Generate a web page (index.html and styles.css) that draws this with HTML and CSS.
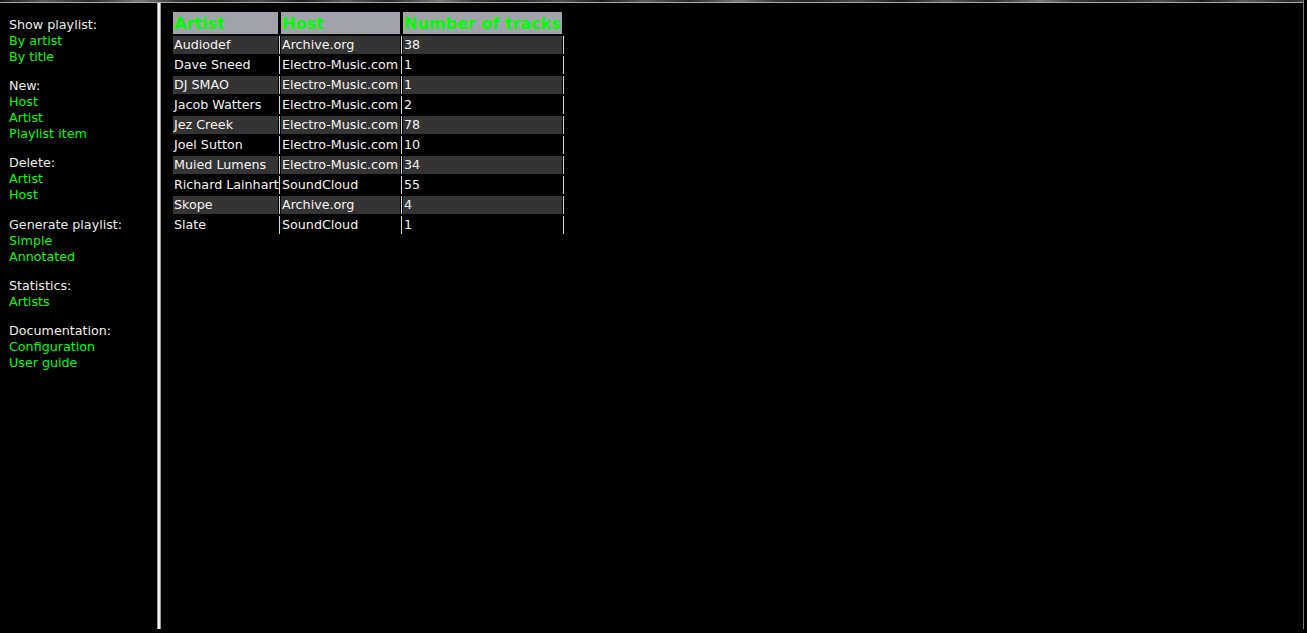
FILE: index.html
```html
<!DOCTYPE html>
<html>
<head>
<meta charset="utf-8">
<title>Playlist</title>
<link rel="stylesheet" href="styles.css">
</head>
<body>
<div class="screen">
  <div class="frameset">
    <div class="topband"></div>
    <div class="main">
      <nav class="sidebar">
        <div class="group">
          <span class="label">Show playlist:</span>
          <a class="link" href="#">By artist</a>
          <a class="link" href="#">By title</a>
        </div>
        <div class="group">
          <span class="label">New:</span>
          <a class="link" href="#">Host</a>
          <a class="link" href="#">Artist</a>
          <a class="link" href="#">Playlist item</a>
        </div>
        <div class="group">
          <span class="label">Delete:</span>
          <a class="link" href="#">Artist</a>
          <a class="link" href="#">Host</a>
        </div>
        <div class="group">
          <span class="label">Generate playlist:</span>
          <a class="link" href="#">Simple</a>
          <a class="link" href="#">Annotated</a>
        </div>
        <div class="group">
          <span class="label">Statistics:</span>
          <a class="link" href="#">Artists</a>
        </div>
        <div class="group">
          <span class="label">Documentation:</span>
          <a class="link" href="#">Configuration</a>
          <a class="link" href="#">User guide</a>
        </div>
      </nav>
      <div class="divider"></div>
      <main class="content">
        <table class="stats">
          <thead>
            <tr>
              <th class="c-artist">Artist</th>
              <th class="c-host">Host</th>
              <th class="c-num">Number of tracks</th>
            </tr>
          </thead>
          <tbody>
            <tr class="odd"><td>Audiodef</td><td>Archive.org</td><td>38</td></tr>
            <tr><td>Dave Sneed</td><td>Electro-Music.com</td><td>1</td></tr>
            <tr class="odd"><td>DJ SMAO</td><td>Electro-Music.com</td><td>1</td></tr>
            <tr><td>Jacob Watters</td><td>Electro-Music.com</td><td>2</td></tr>
            <tr class="odd"><td>Jez Creek</td><td>Electro-Music.com</td><td>78</td></tr>
            <tr><td>Joel Sutton</td><td>Electro-Music.com</td><td>10</td></tr>
            <tr class="odd"><td>Muied Lumens</td><td>Electro-Music.com</td><td>34</td></tr>
            <tr><td>Richard Lainhart</td><td>SoundCloud</td><td>55</td></tr>
            <tr class="odd"><td>Skope</td><td>Archive.org</td><td>4</td></tr>
            <tr><td>Slate</td><td>SoundCloud</td><td>1</td></tr>
          </tbody>
        </table>
      </main>
    </div>
  </div>
  <div class="edge"></div>
</div>
</body>
</html>
```

FILE: styles.css
```css
html, body {
  margin: 0;
  padding: 0;
  background: #000;
  height: 633px;
  overflow: hidden;
}

body {
  font-family: "DejaVu Sans", Verdana, sans-serif;
  font-size: 12.7px;
  color: #eeeeee;
}

.screen {
  display: flex;
  align-items: flex-start;
}

.frameset {
  width: 1303px;
  display: flex;
  flex-direction: column;
}

.topband {
  height: 3px;
  background:
    linear-gradient(to bottom, transparent 0, transparent 2px, #a9a9a9 2px, #a9a9a9 3px),
    repeating-linear-gradient(90deg, #1a1a1a 0, #5a5a5a 45px, #2a2a2a 90px, #777 140px, #3a3a3a 175px, #222 210px, #4e4e4e 260px, #1e1e1e 300px);
}

.main {
  display: flex;
  height: 626px;
}

.sidebar {
  width: 157px;
  box-sizing: border-box;
  padding: 14px 0 0 9px;
  display: flex;
  flex-direction: column;
  gap: 13.2px;
  line-height: 16px;
}

.group {
  display: flex;
  flex-direction: column;
}

.label {
  color: #eeeeee;
  white-space: nowrap;
}

.link {
  color: #00ff00;
  text-decoration: none;
  white-space: nowrap;
}

.divider {
  width: 2px;
  background: #f2f2f2;
  border-left: 1px solid #9a9a9a;
  border-right: 1px solid #9a9a9a;
}

.content {
  flex: 1;
  padding: 7px 0 0 9px;
}

.stats {
  border-collapse: separate;
  border-spacing: 3px 2px;
  table-layout: fixed;
  width: 395px;
}

.stats th {
  background: #a2a2aa;
  color: #00ff00;
  font-size: 16px;
  font-weight: bold;
  line-height: 21px;
  text-align: left;
  padding: 1px 0 0 1px;
  white-space: nowrap;
  overflow: visible;
}

.c-artist { width: 104px; }
.c-host { width: 118px; }
.c-num { width: 158px; }

.stats td {
  color: #f4f4f4;
  line-height: 18px;
  padding: 0 0 0 1px;
  white-space: nowrap;
  overflow: visible;
  box-shadow: 1px 0 0 #000, 2px 0 0 #d8d8d8;
}

.stats tr.odd td {
  background: #343434;
}

.edge {
  width: 1px;
  height: 629px;
  background: #7a7a7a;
}
```
